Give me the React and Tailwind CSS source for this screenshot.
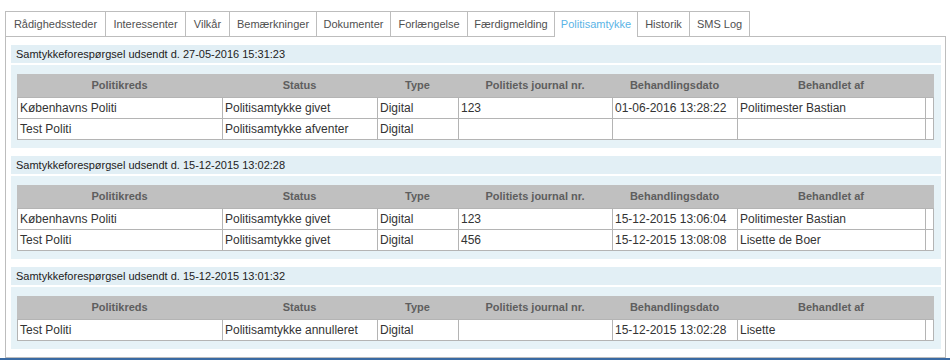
import React from "react";

const tabs = [
  { label: "Rådighedssteder", w: "w-[101px]" },
  { label: "Interessenter", w: "w-[81px]" },
  { label: "Vilkår", w: "w-[45px]" },
  { label: "Bemærkninger", w: "w-[88px]" },
  { label: "Dokumenter", w: "w-[75px]" },
  { label: "Forlængelse", w: "w-[78px]" },
  { label: "Færdigmelding", w: "w-[88px]" },
  { label: "Politisamtykke", w: "w-[84px]", active: true },
  { label: "Historik", w: "w-[53px]" },
  { label: "SMS Log", w: "w-[61px]" },
];

const columns = ["Politikreds", "Status", "Type", "Politiets journal nr.", "Behandlingsdato", "Behandlet af", ""];

const requests = [
  {
    sent: "27-05-2016 15:31:23",
    rows: [
      ["Københavns Politi", "Politisamtykke givet", "Digital", "123", "01-06-2016 13:28:22", "Politimester Bastian"],
      ["Test Politi", "Politisamtykke afventer", "Digital", "", "", ""],
    ],
  },
  {
    sent: "15-12-2015 13:02:28",
    rows: [
      ["Københavns Politi", "Politisamtykke givet", "Digital", "123", "15-12-2015 13:06:04", "Politimester Bastian"],
      ["Test Politi", "Politisamtykke givet", "Digital", "456", "15-12-2015 13:08:08", "Lisette de Boer"],
    ],
  },
  {
    sent: "15-12-2015 13:01:32",
    rows: [["Test Politi", "Politisamtykke annulleret", "Digital", "", "15-12-2015 13:02:28", "Lisette"]],
  },
];

const gridCols = "grid grid-cols-[205px_155px_81px_154px_125px_188px_9px]";

const Request = ({ sent, rows }) => (
  <div className="w-[930px]">
    {/* header strip */}
    <div className="h-[18px] bg-[#e2eff5] pl-[5px] flex items-center text-[11px] text-[#222]">
      Samtykkeforespørgsel udsendt d. {sent}
    </div>
    <div className="h-[2px] bg-white"></div>

    {/* body */}
    <div className="bg-[#e6f2f7] pl-[6px] pr-[7px] pt-[9px] pb-[8px]">
      <div className={`${gridCols} h-[23px] bg-[#c0c0c0]`}>
        {columns.map((c, i) => (
          <div key={i} className="flex items-center justify-center text-[11px] font-bold text-[#5e5e5e]">
            {c}
          </div>
        ))}
      </div>
      {rows.map((r, ri) => (
        <div
          key={ri}
          className={`${gridCols} h-[21px] bg-white border-t border-[#b4b4b4] ${ri === rows.length - 1 ? "h-[22px] border-b" : ""}`}
        >
          {[...r, ""].map((cell, ci) => (
            <div
              key={ci}
              className={`border-l border-[#b4b4b4] pl-[2px] flex items-center text-[12px] text-[#333] whitespace-nowrap ${ci === 6 ? "border-r" : ""}`}
            >
              {cell}
            </div>
          ))}
        </div>
      ))}
    </div>
  </div>
);

export default function App() {
  return (
    <div className="w-[950px] h-[360px] bg-white flex flex-col font-['Liberation_Sans',Arial,sans-serif] overflow-hidden">
      {/* TABS */}
      <div className="pt-[11px] pl-[5px] flex items-start">
        {tabs.map((t, i) => (
          <div
            key={t.label}
            className={`${t.w} ${i > 0 ? "-ml-px" : ""} border-t border-l border-r border-[#bdbdbd] bg-white flex items-center justify-center pt-[1px] text-[11px] ${
              t.active ? "h-[26px] relative z-10 text-[#5ab4e6] pb-[1px]" : "h-[25px] text-[#505050]"
            }`}
          >
            {t.label}
          </div>
        ))}
      </div>

      {/* PANEL */}
      <div className="w-[941px] ml-[5px] -mt-px h-[322px] border border-[#bdbdbd] pl-[5px] pt-[8px] flex flex-col gap-[8px]">
        {requests.map((r) => (
          <Request key={r.sent} sent={r.sent} rows={r.rows} />
        ))}
      </div>

      {/* taskbar edge */}
      <div className="h-[2px] bg-[#3a6aa3]"></div>
    </div>
  );
}
